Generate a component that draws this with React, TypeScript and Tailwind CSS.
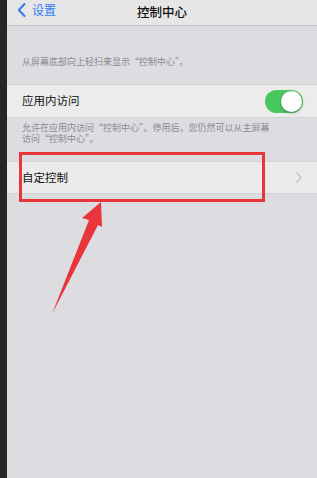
import React from "react";

const font = {
  fontFamily: '"Noto Sans CJK SC", "Noto Sans", sans-serif',
};

function Toggle() {
  return (
    <div className="relative flex h-[23px] w-[38px] items-center justify-end rounded-full bg-[#4bc760] pr-[1px]">
      <div className="h-[21px] w-[21px] rounded-full bg-white shadow-[0_1px_3px_rgba(0,0,0,0.35)]" />
    </div>
  );
}

export default function App() {
  return (
    <div
      className="relative flex h-[478px] w-[317px] overflow-hidden bg-[#dddce1]"
      style={font}
    >
      {/* left edge of the device frame */}
      <div className="w-[7px] shrink-0 bg-[#262626]" />

      <div className="flex flex-1 flex-col">
        {/* Nav bar */}
        <header className="relative flex h-[26px] items-center justify-center border-b border-[#c6c6ca] bg-[#e6e6e7]">
          <div className="absolute left-[10px] top-[3px] flex items-center gap-[6px] text-[#2f7cf5]">
            <svg width="9" height="14" viewBox="0 0 9 14" fill="none">
              <path
                d="M7.5 1 L1.8 7 L7.5 13"
                stroke="currentColor"
                strokeWidth="2"
                strokeLinecap="round"
                strokeLinejoin="round"
              />
            </svg>
            <span className="text-[12px] leading-[14px]">设置</span>
          </div>
          <h1 className="text-[12.5px] font-medium leading-none text-[#111]">控制中心</h1>
        </header>

        {/* Section footer */}
        <p className="mt-[30px] pl-[15px] text-[9px] leading-[11px] text-[#8b8b90]">
          从屏幕底部向上轻扫来显示“控制中心”。
        </p>

        {/* In-app access row */}
        <div className="mt-[17px] flex h-[34px] items-center justify-between border-y border-[#d3d3d6] bg-[#ececec] pl-[15px] pr-[14px]">
          <span className="text-[11.5px] text-[#111]">应用内访问</span>
          <Toggle />
        </div>
        <p className="mt-[4px] pl-[15px] pr-[40px] text-[9px] leading-[11px] text-[#8b8b90]">
          允许在应用内访问“控制中心”。停用后，您仍然可以从主屏幕访问“控制中心”。
        </p>

        {/* Customize row */}
        <div className="mt-[17px] flex h-[33px] items-center justify-between border-y border-[#d3d3d6] bg-[#ebebeb] pl-[15px] pr-[15px]">
          <span className="text-[11.5px] text-[#111]">自定控制</span>
          <svg width="6" height="11" viewBox="0 0 6 11" fill="none">
            <path
              d="M1 1 L5 5.5 L1 10"
              stroke="#c4c4c8"
              strokeWidth="1.5"
              strokeLinecap="round"
              strokeLinejoin="round"
            />
          </svg>
        </div>
      </div>

      {/* Annotation: highlight box */}
      <div className="pointer-events-none absolute left-[19px] top-[152px] h-[50px] w-[246px] border-[3px] border-[#e8363a]" />

      {/* Annotation: arrow */}
      <svg
        className="pointer-events-none absolute left-0 top-0"
        width="317"
        height="478"
        viewBox="0 0 317 478"
      >
        <polygon
          points="101,202 102,227 98,225 52,314 89,220 82,218"
          fill="#e8363a"
        />
      </svg>
    </div>
  );
}
